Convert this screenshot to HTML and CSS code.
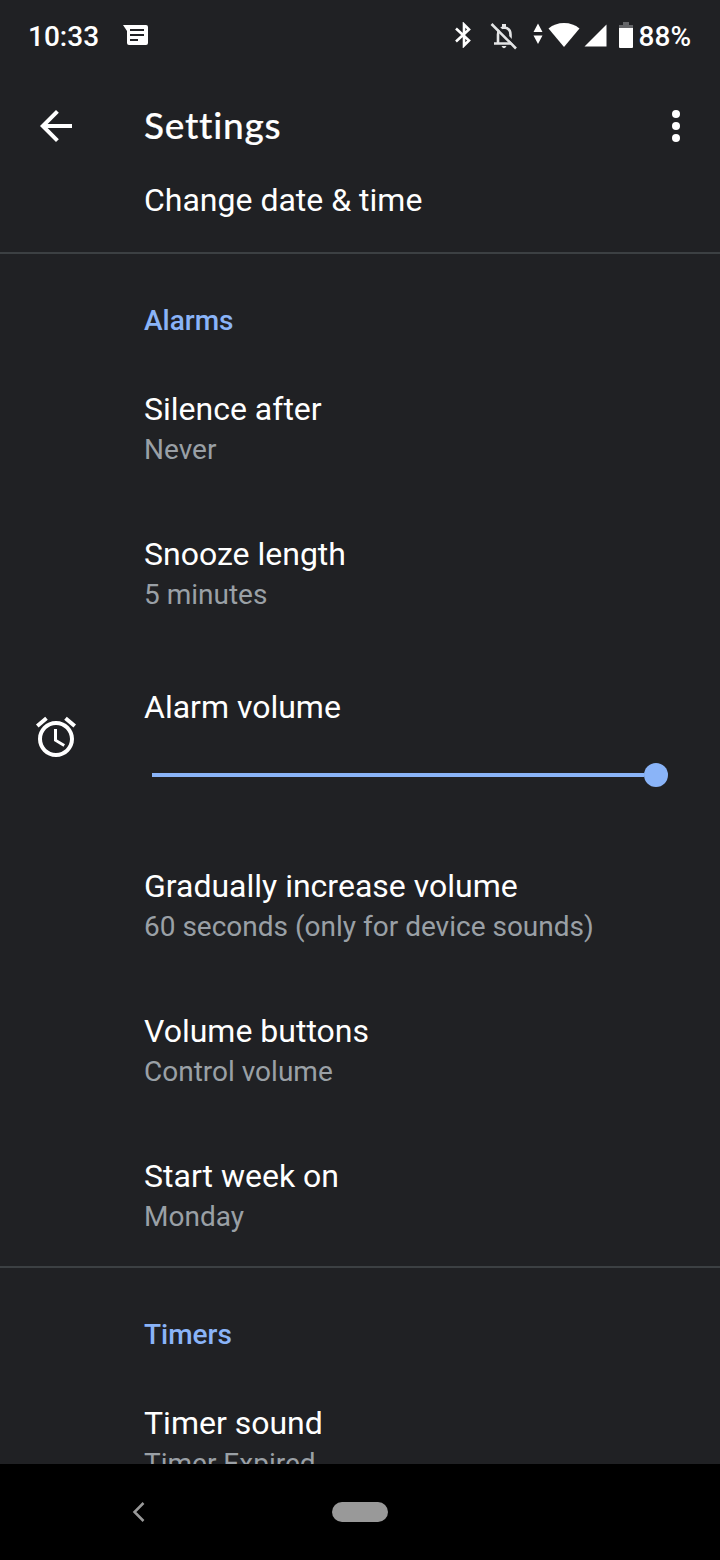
FILE: index.html
```html
<!DOCTYPE html>
<html lang="en">
<head>
    <meta charset="UTF-8">
    <title>Settings</title>
    <link rel="stylesheet" href="styles.css">
</head>
<body>
    <div class="screen">
        <div class="status-bar">
            <span class="clock">10:33</span>
            <svg class="icon-message" width="26" height="22" viewBox="0 0 26 22">
                <path fill="#fff" d="M0 1h23q2 0 2 2v16q0 2-2 2H6q-2 0-2-2V7z"/>
                <path stroke="#202124" stroke-width="2" d="M7 6h14M7 11h14M7 16h8"/>
            </svg>
            <div class="status-icons">
                <svg class="icon-bluetooth" width="18" height="26" viewBox="0 0 18 26">
                    <path fill="none" stroke="#fff" stroke-width="2.600" d="M2 6.500l13 12-5 5V2.500l5 5-13 12"/>
                </svg>
                <svg class="icon-bell" width="28" height="28" viewBox="0 0 28 28">
                    <path fill="none" stroke="#e4e5e6" stroke-width="2.600" d="M4 21.500h20M8 21v-8.500q0-6.500 6-7 6.500.5 6.500 7V21"/>
                    <path fill="#e4e5e6" d="M12 2h4v4h-4zM11.500 24h5q-2.500 4.500-5 0z"/>
                    <path stroke="#202124" stroke-width="3" d="M4.500 1.500l23 23"/>
                    <path stroke="#e4e5e6" stroke-width="2.600" d="M1.500 2L26 26.500"/>
                </svg>
                <svg class="icon-data" width="10" height="22" viewBox="0 0 10 22">
                    <path fill="#fff" d="M.5 9L5 .5 9.500 9zM.5 12.500h9L5 21z"/>
                </svg>
                <svg class="icon-wifi" width="32" height="26" viewBox="0 0 32 26">
                    <path fill="#fff" d="M.5 6.500Q7 1 16 1t15.500 5.500L16 25z"/>
                </svg>
                <svg class="icon-signal" width="23" height="23" viewBox="0 0 23 23">
                    <path fill="#fff" d="M22.500.5v22H.5z"/>
                </svg>
                <svg class="icon-battery" width="14" height="26" viewBox="0 0 14 26">
                    <path fill="#646568" d="M4 0h6v3h4v4H0V3h4z"/>
                    <path fill="#fff" d="M0 6h14v19q0 1-1 1H1q-1 0-1-1z"/>
                </svg>
                <span class="percent">88%</span>
            </div>
        </div>

        <div class="app-bar">
            <svg class="icon-back" width="48" height="48" viewBox="0 0 24 24">
                <path fill="#fff" d="M20 11H7.830l5.590-5.590L12 4l-8 8 8 8 1.410-1.410L7.830 13H20v-2z"/>
            </svg>
            <h1 class="title">Settings</h1>
            <svg class="icon-more" width="48" height="48" viewBox="0 0 24 24">
                <g fill="#fff">
                    <circle cx="12" cy="6" r="2"/>
                    <circle cx="12" cy="12" r="2"/>
                    <circle cx="12" cy="18" r="2"/>
                </g>
            </svg>
        </div>

        <div class="list">
            <div class="item item-date">
                <div class="name">Change date &amp; time</div>
            </div>

            <h2 class="section">Alarms</h2>
            <div class="item">
                <div class="name">Silence after</div>
                <div class="value">Never</div>
            </div>
            <div class="item">
                <div class="name">Snooze length</div>
                <div class="value">5 minutes</div>
            </div>
            <div class="item-volume">
                <svg class="icon-alarm" width="48" height="48" viewBox="0 0 24 24">
                    <path fill="#fff" d="M22 5.720l-4.600-3.860-1.290 1.530 4.600 3.860L22 5.720zM7.880 3.390L6.600 1.860 2 5.710l1.290 1.530 4.590-3.850zM12.500 8H11v6l4.750 2.850.75-1.230-4-2.370V8zM12 4c-4.970 0-9 4.030-9 9s4.020 9 9 9c4.970 0 9-4.030 9-9s-4.030-9-9-9zm0 16c-3.870 0-7-3.130-7-7s3.130-7 7-7 7 3.130 7 7-3.130 7-7 7z"/>
                </svg>
                <div class="volume">
                    <div class="name">Alarm volume</div>
                    <div class="slider">
                        <div class="track"></div>
                        <div class="thumb"></div>
                    </div>
                </div>
            </div>
            <div class="item">
                <div class="name">Gradually increase volume</div>
                <div class="value">60 seconds (only for device sounds)</div>
            </div>
            <div class="item">
                <div class="name">Volume buttons</div>
                <div class="value">Control volume</div>
            </div>
            <div class="item item-last">
                <div class="name">Start week on</div>
                <div class="value">Monday</div>
            </div>

            <h2 class="section">Timers</h2>
            <div class="item">
                <div class="name">Timer sound</div>
                <div class="value">Timer Expired</div>
            </div>
        </div>

        <div class="nav-bar">
            <svg class="icon-nav-back" width="14" height="22" viewBox="0 0 14 22">
                <path fill="none" stroke="#999" stroke-width="2.500" d="M11.500 2L2.500 11l9 9"/>
            </svg>
            <div class="home-pill"></div>
        </div>
    </div>
</body>
</html>
```

FILE: styles.css
```css
* {
    box-sizing: border-box;
}

body {
    margin: 0;
    background: #202124;
    color: #fff;
    font-family: Roboto, "Liberation Sans", sans-serif;
}

.screen {
    width: 720px;
    height: 1560px;
    display: flex;
    flex-direction: column;
    overflow: hidden;
}

/* Status bar */
.status-bar {
    height: 72px;
    flex: none;
    display: flex;
    align-items: center;
    padding: 0 29px 0 28px;
    font-size: 28px;
    font-weight: 500;
}

.clock {
    width: 95px;
    line-height: 33px;
}

.icon-message {
    margin-bottom: 2px;
}

.status-icons {
    display: flex;
    align-items: center;
    margin-left: auto;
}

.icon-bluetooth { margin-right: 18px; margin-bottom: 2px; }
.icon-bell { margin-right: 15px; }
.icon-data { margin: 0 5px 4px 0; }
.icon-wifi { margin-right: 4px; margin-bottom: 2px; }
.icon-signal { margin-right: 12px; margin-bottom: 1px; }
.icon-battery { margin-right: 6px; margin-bottom: 2px; }

/* App bar */
.app-bar {
    height: 110px;
    flex: none;
    display: flex;
    align-items: center;
    padding: 0 20px 2px 32px;
}

.title {
    margin: 0 auto 2px 64px;
    font-family: Lato, Roboto, sans-serif;
    font-size: 37px;
    font-weight: 500;
    line-height: 48px;
    letter-spacing: 0.75px;
    -webkit-text-stroke: 0.2px #fff;
}

/* Settings list */
.list {
    flex: 1;
    min-height: 0;
    overflow: hidden;
}

.item {
    height: 145px;
    padding: 33px 32px 31px 144px;
}

.item-date {
    height: 72px;
    padding-top: 0;
    padding-bottom: 0;
    border-bottom: 2px solid #3c4043;
}

.item-date .name {
    line-height: 36px;
}

.item-last {
    border-bottom: 2px solid #3c4043;
    height: 146px;
}

.name {
    font-size: 32px;
    line-height: 43px;
}

.value {
    font-size: 28px;
    line-height: 38px;
    color: #9aa0a6;
}

.section {
    height: 101px;
    margin: 0;
    padding: 48px 0 0 144px;
    font-size: 28px;
    font-weight: 500;
    line-height: 38px;
    color: #8ab4f8;
}

.item-volume {
    height: 187px;
    display: flex;
    padding: 41px 52px 0 32px;
}

.icon-alarm {
    margin-top: 27px;
    margin-right: 64px;
    flex: none;
}

.volume {
    flex: 1;
}

.slider {
    display: flex;
    align-items: center;
    margin: 34px 0 0 8px;
}

.track {
    flex: 1;
    height: 4px;
    background: #8ab4f8;
}

.thumb {
    width: 24px;
    height: 24px;
    border-radius: 50%;
    background: #8ab4f8;
}

/* Navigation bar */
.nav-bar {
    height: 96px;
    flex: none;
    display: flex;
    align-items: center;
    padding-left: 132px;
    background: #000;
}

.home-pill {
    width: 56px;
    height: 20px;
    margin-left: 186px;
    border-radius: 10px;
    background: #999;
}
```
